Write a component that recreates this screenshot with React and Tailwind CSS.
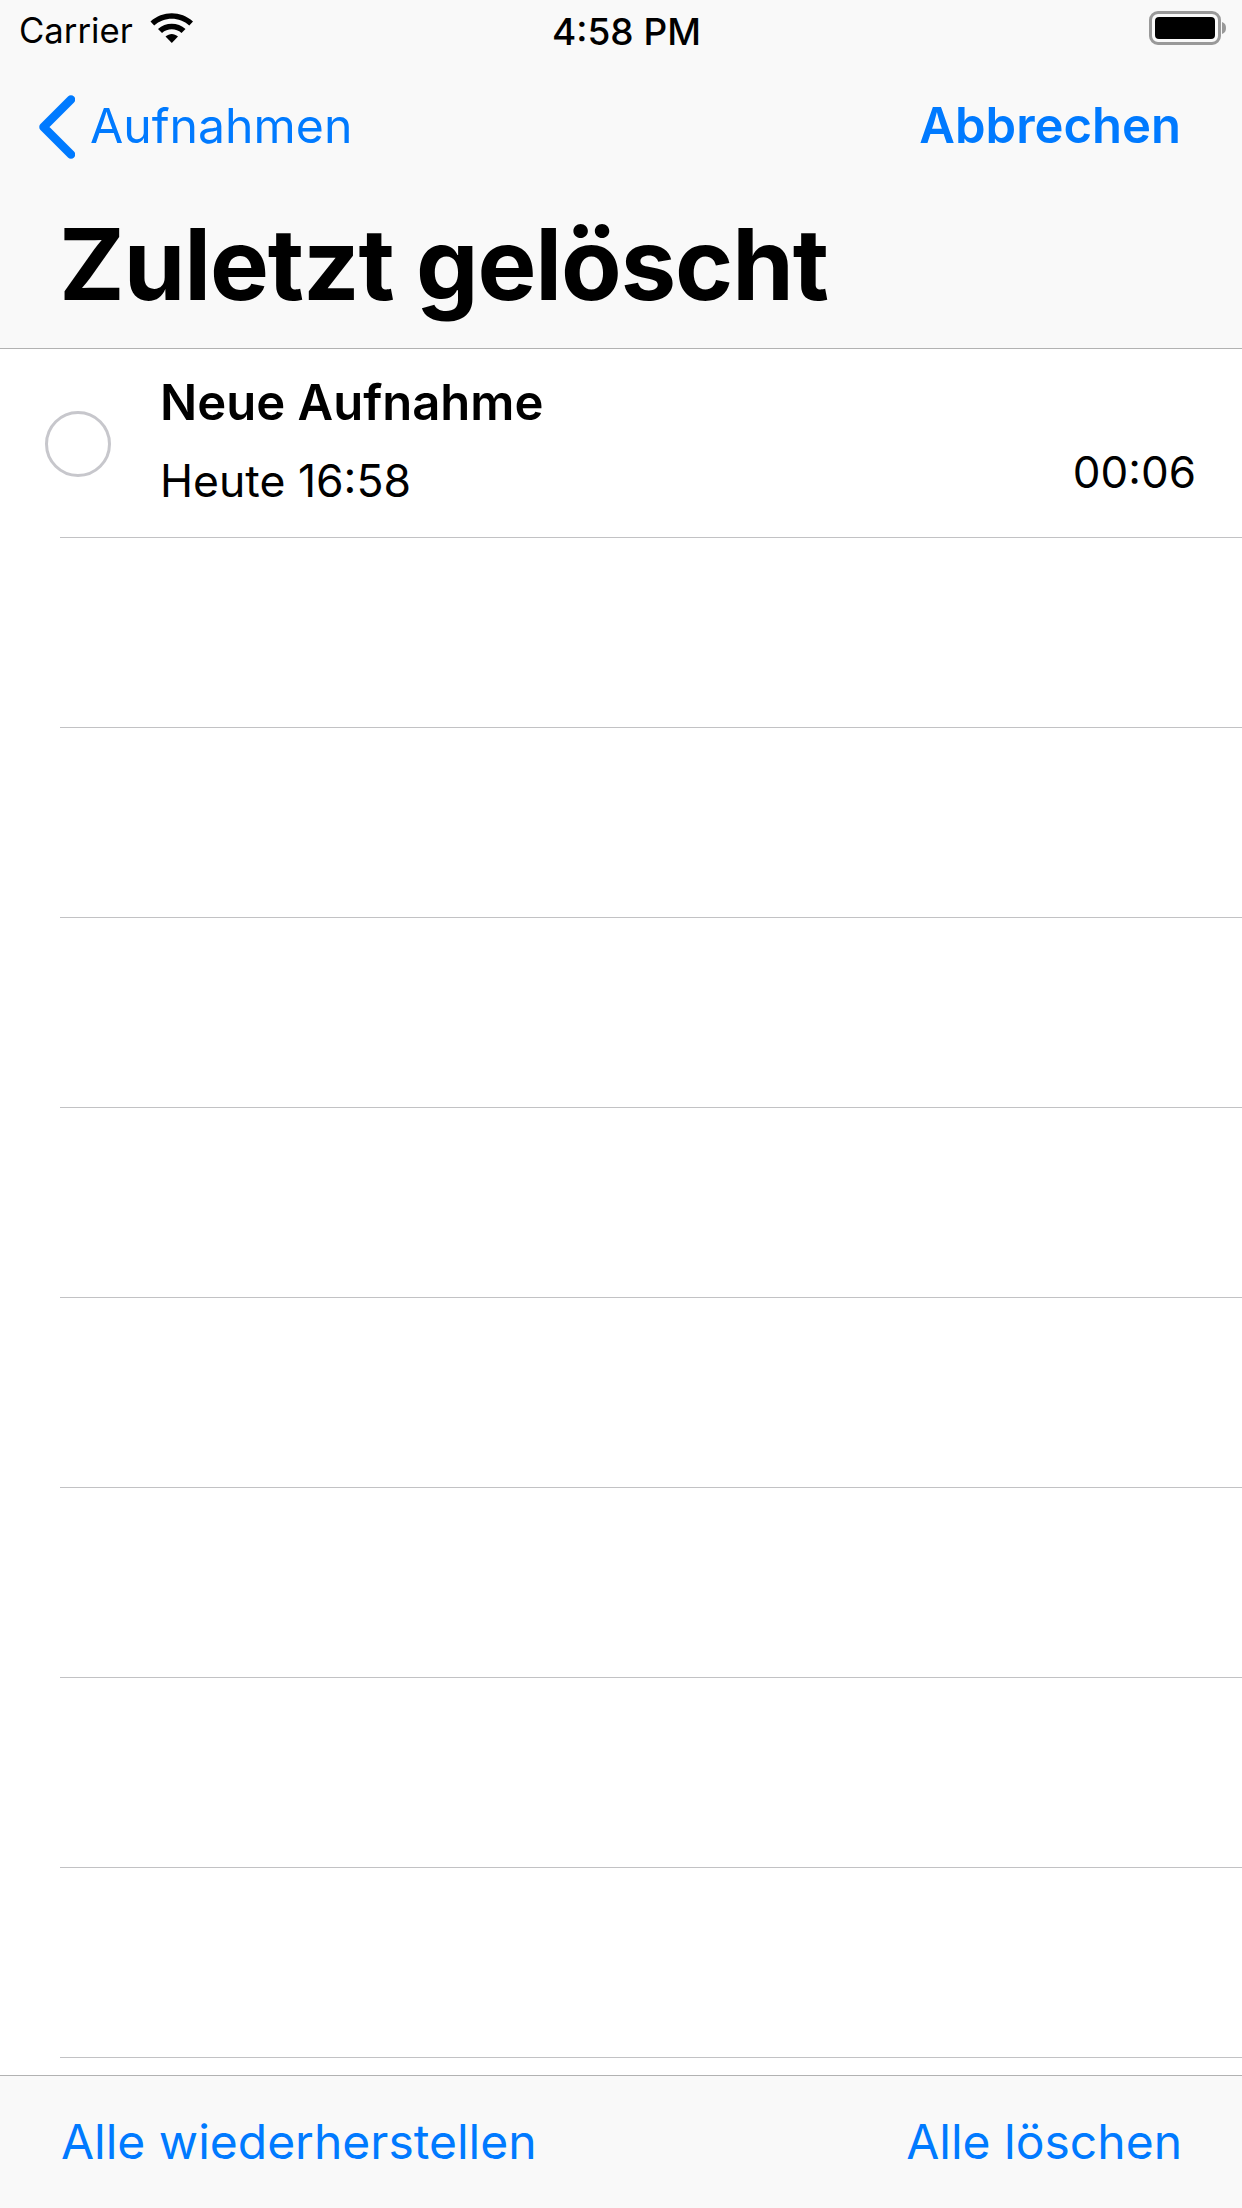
export default function App() {
  return (
    <div className="w-[1242px] h-[2208px] flex flex-col bg-white text-black font-['Inter',sans-serif] overflow-hidden">
      <header className="h-[349px] shrink-0 bg-[#f9f9f9] border-b border-[#b2b2b2] flex flex-col">
        <div className="h-[60px] flex items-center justify-between pl-[19px] pr-[15px] relative">
          <div className="flex items-center">
            <span className="text-[34.7px] leading-[60px]">Carrier</span>
            <svg className="ml-[17px] mb-[4px]" width="44" height="32" viewBox="0 0 44 32">
              <path d="M0.5 9.5 C12.5 -1.5 31 -1.5 43 9.5 L39.3 13.5 C29.5 4.5 14 4.5 4.2 13.5 Z" fill="#000" />
              <path d="M8 17 C15.5 10 28 10 35.5 17 L31.5 21 C26 16 17.5 16 12 21 Z" fill="#000" />
              <path d="M15.5 24.5 C19.5 21 24 21 28 24.5 L21.8 31 Z" fill="#000" />
            </svg>
          </div>
          <span className="absolute left-[552px] top-[12px] text-[37px] leading-[40px] font-medium">4:58 PM</span>
          <svg width="78" height="36" viewBox="0 0 78 36" className="mb-[2px]">
            <rect x="1.5" y="1.5" width="69" height="31" rx="7.5" fill="none" stroke="#999" strokeWidth="3" />
            <rect x="6" y="6" width="60" height="22" rx="4" fill="#000" />
            <path d="M73 11 C76 12 77 14 77 17 C77 20 76 22 73 23 Z" fill="#999" />
          </svg>
        </div>
        <div className="h-[133px] shrink-0 flex items-center justify-between pl-[39px] pr-[61px]">
          <div className="flex items-center text-[#007aff]">
            <svg width="36" height="64" viewBox="0 0 36 64" className="mr-[15px]">
              <path d="M32 4.5 L4.5 32 L32 59.5" fill="none" stroke="#007aff" strokeWidth="8.5" strokeLinecap="round" strokeLinejoin="round" />
            </svg>
            <span className="text-[48.2px] leading-[60px] -translate-y-px">Aufnahmen</span>
          </div>
          <span className="text-[#007aff] text-[49px] leading-[60px] font-semibold -translate-y-px">Abbrechen</span>
        </div>
        <h1 className="pl-[59px] pt-[16px] text-[99px] leading-[110px] tracking-[-1.1px] font-bold">Zuletzt gelöscht</h1>
      </header>

      <main className="flex-1 flex flex-col">
        <div className="h-[188px] shrink-0 relative flex">
          <div className="w-[160px] shrink-0 flex items-center pl-[45px] pt-[2px]">
            <div className="w-[66px] h-[66px] shrink-0 rounded-full border-[3px] border-[#c7c7cc]" />
          </div>
          <div className="flex-1 flex flex-col pt-[25px]">
            <span className="text-[49px] leading-[58px] font-semibold">Neue Aufnahme</span>
            <span className="text-[44.5px] leading-[52px] mt-[23px]">Heute 16:58</span>
          </div>
          <span className="text-[44px] leading-[52px] self-end mb-[39px] pr-[46px]">00:06</span>
        </div>
        <div className="ml-[60px] h-[1px] shrink-0 bg-[#c2c2c4]" />
        {Array.from({ length: 8 }).map((_, i) => (
          <div key={i} className="shrink-0">
            <div className="h-[189px]" />
            <div className="ml-[60px] h-[1px] bg-[#c2c2c4]" />
          </div>
        ))}
      </main>

      <footer className="h-[133px] shrink-0 bg-[#f9f9f9] border-t border-[#b2b2b2] flex items-center justify-between pl-[61px] pr-[60px] text-[#007aff] text-[48px]">
        <span>Alle wiederherstellen</span>
        <span>Alle löschen</span>
      </footer>
    </div>
  );
}
